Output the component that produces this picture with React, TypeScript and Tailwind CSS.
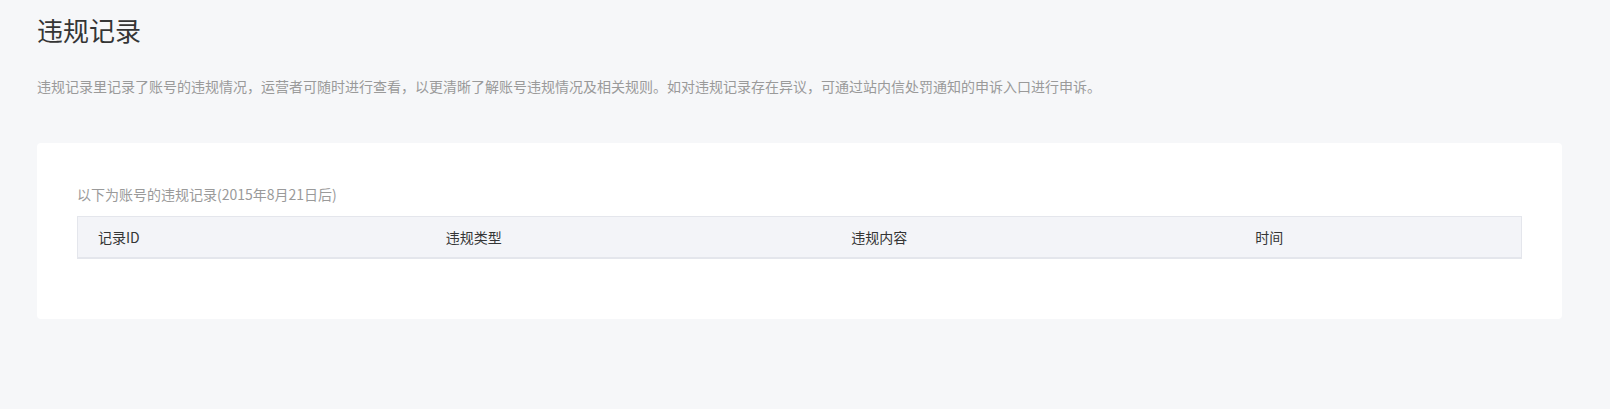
const cols = [
  { label: '记录ID', w: 'w-[24.1%]' },
  { label: '违规类型', w: 'w-[28.1%]' },
  { label: '违规内容', w: 'w-[28%]' },
  { label: '时间', w: 'flex-1' },
];

export default function App() {
  return (
    <div
      className="min-h-[409px] bg-[#f6f7f9] pl-[37px] pr-[48px] pt-[12px] text-[#353535]"
      style={{ fontFamily: '"Microsoft YaHei", "Noto Sans CJK SC", "Liberation Sans", sans-serif' }}
    >
      <h1 className="text-[26px] leading-[36px] font-normal text-[#353535]">违规记录</h1>
      <p className="mt-[28px] text-[14px] leading-[20px] text-[#9a9a9a]">
        违规记录里记录了账号的违规情况，运营者可随时进行查看，以更清晰了解账号违规情况及相关规则。如对违规记录存在异议，可通过站内信处罚通知的申诉入口进行申诉。
      </p>

      <div className="mt-[47px] h-[176px] rounded-[4px] bg-white px-[40px] pt-[41px]">
        <p className="text-[14px] leading-[20px] text-[#9a9a9a]">以下为账号的违规记录(2015年8月21日后)</p>
        <div className="mt-[12px] flex h-[43px] border border-b-2 border-[#e4e6ec] bg-[#f3f4f8]">
          {cols.map((c) => (
            <div key={c.label} className={`${c.w} flex items-center pl-[20px] text-[14px] text-[#353535]`}>
              {c.label}
            </div>
          ))}
        </div>
      </div>
    </div>
  );
}
